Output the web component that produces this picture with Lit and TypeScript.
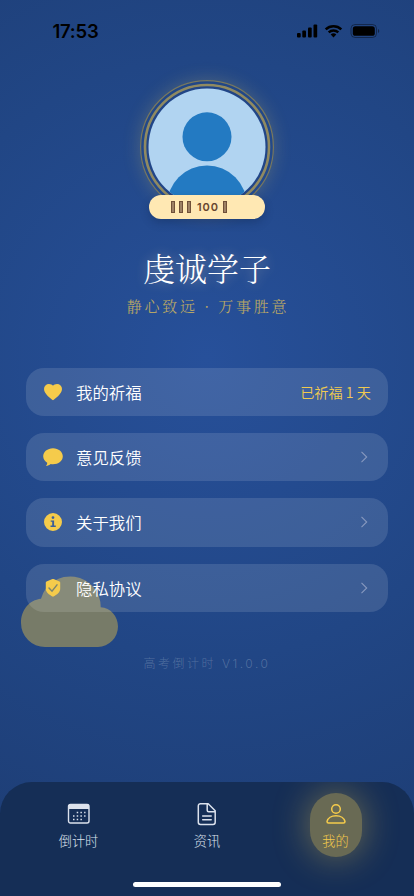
import { LitElement, html, css, svg } from "lit";
import { customElement } from "lit/decorators.js";

const heart = svg`<path d="M10 18.200C8.600 17 1 12.200 1 6.900A4.900 4.900 0 0 1 5.900 2C7.800 2 9.200 2.700 10 3.800 10.800 2.700 12.200 2 14.100 2A4.900 4.900 0 0 1 19 6.900C19 12.200 11.400 17 10 18.200Z"/>`;
const bubble = svg`<path d="M10 1.200C4.500 1.200 .2 4.800 .2 9.300c0 2.800 1.700 5 4 6.500.1 1.200-.6 2.300-1.200 3.100 1.900 0 3.500-.8 4.700-1.800.8.200 1.500.2 2.300.2 5.500 0 9.800-3.500 9.800-8S15.500 1.200 10 1.200Z"/>`;
const info = svg`<path fill-rule="evenodd" d="M10 1a9 9 0 1 1 0 18 9 9 0 0 1 0-18ZM10 4.200a1.400 1.400 0 1 0 0 2.800 1.400 1.400 0 0 0 0-2.800ZM7.700 8.400v1.400h1.500v3.800H7.500v1.400h5.300v-1.400h-1.700V8.400Z"/>`;
const shield = svg`<path d="M9.400 1.100q.6-.3 1.200 0l5.900 2.400q.7.300.7 1v6.200c0 3.300-3 5.900-7.200 8.100-4.200-2.200-7.200-4.800-7.200-8.100V4.500q0-.7.700-1Z"/><path d="m6 10.100 3 3.100 5-6.300" fill="none" stroke="#7d856f" stroke-width="1.500" stroke-linecap="round"/>`;

@customElement("app-root")
export class AppRoot extends LitElement {
  static styles = css`
    :host {
      display: flex;
      flex-direction: column;
      position: relative;
      box-sizing: border-box;
      width: 414px;
      height: 896px;
      overflow: hidden;
      color: #fff;
      font-family: "Noto Sans CJK SC", sans-serif;
      font-weight: 300;
      background: radial-gradient(circle at 50% 40%, #27509a 0, #214685 300px, #1d3c72 580px);
    }
    .status {
      display: flex;
      justify-content: space-between;
      align-items: center;
      height: 62px;
      padding: 0 34px 0 52.500px;
      color: #000;
    }
    .time { font: 600 18.500px/22px Inter, sans-serif; letter-spacing: -0.250px; }
    .profile { display: flex; flex-direction: column; align-items: center; padding-top: 18px; }
    .portrait { display: flex; flex-direction: column; align-items: center; height: 164px; }
    .avatar { width: 134px; height: 134px; border-radius: 50%; box-shadow: 0 0 18px rgba(238, 204, 91, 0.22); }
    .avatar svg, .row svg, .tab svg, .icons { display: block; }
    .badge {
      position: relative;
      display: flex;
      align-items: center;
      box-sizing: border-box;
      width: 116px;
      height: 24px;
      margin-top: -19px;
      padding-left: 22px;
      border-radius: 12px;
      color: #66452f;
      background: #ffe8b3;
      box-shadow: 0 4px 9px rgba(16, 36, 78, 0.32);
      font: 600 11px/24px Inter, sans-serif;
      letter-spacing: 0.900px;
    }
    .glyphs { display: flex; gap: 4px; }
    .glyph { box-sizing: border-box; width: 4px; height: 12px; border: 1px solid #705039; background: #9d8165; }
    .number { width: 22px; margin: 0 4px 0 6px; }
    .name {
      margin: 0;
      font: 300 32px/46px "Noto Serif CJK SC", "Noto Serif SC", "Noto Sans CJK SC", serif;
      text-shadow: 0 0 12px rgba(255, 232, 179, 0.4);
    }
    .motto {
      margin: 5px 0 0;
      padding-left: 2px;
      color: #b5a567;
      font: 400 15px/22px "Noto Serif CJK SC", "Noto Serif SC", "Noto Sans CJK SC", serif;
      letter-spacing: 2.700px;
    }
    .menu { display: flex; flex-direction: column; gap: 17px; padding: 51px 26px 0 25.500px; position: relative; }
    .row {
      display: flex;
      align-items: center;
      box-sizing: border-box;
      height: 48.200px;
      padding: 0 17px 0 17.500px;
      border-radius: 18px;
      background: rgba(255, 255, 255, 0.12);
      font-size: 16.400px;
    }
    .symbol { fill: #f5cb4b; }
    .label { flex: 1; margin-left: 13px; font-weight: 350; }
    .value { color: #f0ca50; font-size: 14.200px; font-weight: 350; }
    .cloud { position: absolute; left: 21px; top: 576px; width: 97px; height: 71px; }
    .version {
      margin: 41px 0 0;
      text-align: center;
      color: rgba(255, 255, 255, 0.22);
      font: 300 12px/22px Inter, "Noto Sans CJK SC", sans-serif;
      letter-spacing: 2.500px;
    }
    .nav {
      position: relative;
      display: flex;
      justify-content: space-between;
      box-sizing: border-box;
      height: 114px;
      margin-top: auto;
      padding: 11px 52.500px 0;
      border-radius: 32px 32px 0 0;
      overflow: hidden;
      background: #152e56;
      color: #dce2ed;
    }
    .tab {
      display: flex;
      flex-direction: column;
      align-items: center;
      box-sizing: border-box;
      width: 52px;
      height: 64px;
      border-radius: 26px;
      font-size: 13.200px;
      line-height: 20px;
      white-space: nowrap;
    }
    .tab svg { margin: 9px 0 5px; }
    .selected { color: #f5cb4b; background: #696a54; box-shadow: 0 0 36px rgba(245, 203, 75, 0.42); }
    .home { position: absolute; left: 133px; bottom: 9px; width: 148px; height: 5px; border-radius: 3px; background: #fff; }
  `;

  row(icon: unknown, label: string, value = "") {
    return html`<div class="row">
      <svg class="symbol" width="20" height="20" viewBox="0 0 20 20">${icon}</svg>
      <span class="label">${label}</span>
      ${value
        ? html`<span class="value">${value}</span>`
        : html`<svg width="14" height="14" viewBox="0 0 14 14" fill="none" stroke="#8799bf" stroke-width="1.100"><path d="m4.500 1.800 5.200 5.200-5.200 5.200"/></svg>`}
    </div>`;
  }

  render() {
    return html`
      <div class="status">
        <span class="time">17:53</span>
        <svg class="icons" width="84" height="16" viewBox="0 0 84 16">
          <rect x="1" y="10" width="3.700" height="4.500" rx="1"/><rect x="6.300" y="7.500" width="3.700" height="7" rx="1"/><rect x="12" y="4.500" width="3.700" height="10" rx="1"/><rect x="17.500" y="1.500" width="3.700" height="13" rx="1"/>
          <g fill="none" stroke="#000" stroke-width="2.500"><path d="M29.700 6.400a11.300 11.300 0 0 1 15.600 0M32.700 9.400a7.200 7.200 0 0 1 9.600 0"/></g><path d="m34.700 11.600a4.200 4.200 0 0 1 5.600 0L37.500 14.500Z"/>
          <rect x="55" y="1.500" width="25.500" height="13" rx="4" fill="none" stroke="#000" stroke-opacity=".4"/><rect x="56.800" y="3.200" width="22" height="9.600" rx="2.600"/><path d="M82 6v4a2.200 2.200 0 0 0 0-4Z" opacity=".45"/>
        </svg>
      </div>
      <div class="profile">
        <div class="portrait">
          <div class="avatar">
            <svg width="134" height="134" viewBox="0 0 134 134">
              <defs><clipPath id="face"><circle cx="67" cy="67" r="58.500"/></clipPath></defs>
              <circle cx="67" cy="67" r="61" fill="#214587"/>
              <circle cx="67" cy="67" r="66.400" fill="none" stroke="#78785f" stroke-width="1.200"/>
              <circle cx="67" cy="67" r="62" fill="none" stroke="#908a61" stroke-width="2.600"/>
              <circle cx="67" cy="67" r="58.500" fill="#b1d4f1"/>
              <g clip-path="url(#face)" fill="#237ac2"><circle cx="67" cy="56.800" r="24.500"/><circle cx="67" cy="125.500" r="40"/></g>
            </svg>
          </div>
          <div class="badge">
            <span class="glyphs"><i class="glyph"></i><i class="glyph"></i><i class="glyph"></i></span>
            <span class="number">100</span><i class="glyph"></i>
          </div>
        </div>
        <h1 class="name">虔诚学子</h1>
        <p class="motto">静心致远 · 万事胜意</p>
      </div>
      <svg class="cloud" viewBox="0 0 97 71"><path fill="#777b68" d="M20 22.700A30.400 30.400 0 0 1 79.700 31.300C89.500 31.500 97 40.500 97 50.500A20.500 20.500 0 0 1 77 71H24A24 24 0 0 1 0 47C0 34 8 24 20 22.700Z"/></svg>
      <div class="menu">
        ${this.row(heart, "我的祈福", "已祈福 1 天")}
        ${this.row(bubble, "意见反馈")}
        ${this.row(info, "关于我们")}
        ${this.row(shield, "隐私协议")}
      </div>
      <p class="version">高考倒计时 V1.0.0</p>
      <nav class="nav">
        <div class="tab">
          <svg width="24" height="24" viewBox="0 0 24 24"><rect x="1.500" y="2.500" width="20.500" height="18.500" rx="2" fill="none" stroke="currentColor" stroke-width="1.400"/><path fill="currentColor" d="M2 2.500h20V7H2z"/><path fill="none" stroke="currentColor" stroke-width="1.500" stroke-dasharray="1.500 2.200" d="M9.700 10.500h8.800M6 14h12.500M6 17.500h9"/></svg>
          <span>倒计时</span>
        </div>
        <div class="tab">
          <svg width="24" height="24" viewBox="0 0 24 24" fill="none" stroke="currentColor" stroke-width="1.500" stroke-linejoin="round" stroke-linecap="round"><path d="M5.500 1.700h7.700l7 7v11.500a2.200 2.200 0 0 1-2.200 2.200H5.500a2.200 2.200 0 0 1-2.200-2.200V3.900a2.200 2.200 0 0 1 2.200-2.200ZM12.200 1.700v6.500a1.500 1.500 0 0 0 1.500 1.500h6.500M7.700 14h8.500M7.700 17.700h8.500"/></svg>
          <span>资讯</span>
        </div>
        <div class="tab selected">
          <svg width="24" height="24" viewBox="0 0 24 24" fill="none" stroke="currentColor" stroke-width="1.500" stroke-linejoin="round"><circle cx="12" cy="7" r="4.300"/><path d="M4.500 21C3.500 21 3 20.500 3 19.500 3.700 16 7.500 13.700 12 13.700s8.300 2.300 9 5.800c0 1-.5 1.500-1.500 1.500Z"/></svg>
          <span>我的</span>
        </div>
        <div class="home"></div>
      </nav>
    `;
  }
}
